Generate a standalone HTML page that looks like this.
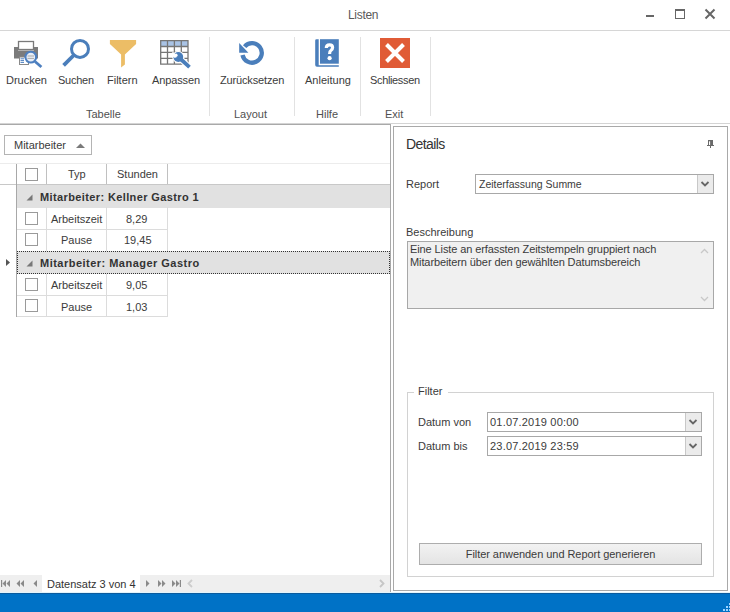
<!DOCTYPE html>
<html><head><meta charset="utf-8">
<style>
*{margin:0;padding:0;box-sizing:border-box}
html,body{width:730px;height:612px;overflow:hidden;background:#fff}
body{position:relative;font-family:"Liberation Sans",sans-serif;font-size:11px;color:#3b3b3b}
.a{position:absolute}
.t{position:absolute;white-space:nowrap;line-height:11px}
.ln{position:absolute;background:#c8c8c8}
</style></head><body>

<!-- title bar -->
<div class="t" style="left:348px;top:9px;font-size:12px;line-height:12px;letter-spacing:-0.3px;color:#5a5a5a">Listen</div>
<div class="a" style="left:646px;top:15px;width:8px;height:2px;background:#666"></div>
<div class="a" style="left:675px;top:9px;width:10px;height:10px;border:1px solid #666;border-top-width:2px"></div>
<svg class="a" style="left:704px;top:8px" width="12" height="12" viewBox="0 0 12 12"><path d="M1.5 1.5L10.5 10.5M10.5 1.5L1.5 10.5" stroke="#666" stroke-width="2"/></svg>

<div class="ln" style="left:0;top:30px;width:730px;height:1px;background:#d6d6d6"></div>


<!-- icons -->
<svg class="a" style="left:0;top:30px" width="440" height="45" viewBox="0 30 440 45">
 <!-- printer -->
 <rect x="18.5" y="41.5" width="15" height="8" fill="#fff" stroke="#7a7a7a" stroke-width="1.3"/>
 <path d="M14 47H18V50.5H34V47H38V58.5H14Z" fill="#7b7b7b"/>
 <rect x="19.5" y="57" width="9" height="7.5" fill="#fff" stroke="#8a8a8a" stroke-width="1"/>
 <path d="M20.5 58.8H24M20.5 60.6H24M20.5 62.4H24" stroke="#4d7fbf" stroke-width="1"/>
 <line x1="35" y1="61.5" x2="41.4" y2="67" stroke="#4d7fbf" stroke-width="2.8"/>
 <circle cx="30.8" cy="57.1" r="5.4" fill="#e8eef6" stroke="#4d7fbf" stroke-width="2.1"/>
 <path d="M27.5 56H34M27.5 58.4H34" stroke="#a9a9a9" stroke-width="1"/>
 <!-- search -->
 <circle cx="80" cy="48.9" r="8.5" fill="none" stroke="#4a7ebb" stroke-width="3"/>
 <line x1="74" y1="55" x2="63.6" y2="65.4" stroke="#4a7ebb" stroke-width="3.8"/>
 <!-- filter -->
 <path d="M109.9 40H136.1V43.9L124.9 54.5V64.5L121.1 67.5V54.5L109.9 43.9Z" fill="#ecbd66"/>
 <!-- grid -->
 <rect x="160.7" y="40.7" width="27.3" height="5.8" fill="#a9c3e5"/>
 <path d="M160.7 40.7H188V64.2H160.7Z M167.5 40.7V64.2 M174.4 40.7V64.2 M181.3 40.7V64.2 M160.7 46.5H188 M160.7 52.4H188 M160.7 58.3H188" fill="none" stroke="#767676" stroke-width="1.3"/>
 <g stroke="#fff" stroke-width="2.2" fill="#fff">
  <circle cx="178.3" cy="57" r="5"/>
  <line x1="180" y1="58.5" x2="189.5" y2="67.2" stroke-width="6"/>
 </g>
 <circle cx="178.3" cy="57" r="4.9" fill="#4a7ebb"/>
 <line x1="180" y1="58.5" x2="189.5" y2="67.2" stroke="#4a7ebb" stroke-width="3.8"/>
 <path d="M173 51.8L176.6 55.4L176.4 57.6L174.2 57.8L170.6 54.2Z" fill="#fff"/>
 <circle cx="176" cy="55.2" r="1.6" fill="#fff"/>
 <!-- refresh -->
 <path d="M242.5 55 A9.75 9.75 0 1 0 244.6 46.6" fill="none" stroke="#4a7ebb" stroke-width="4.3"/>
 <path d="M239.2 43.1V52.8H248.4Z" fill="#4a7ebb"/>
 <!-- book -->
 <path d="M315.2 40.5Q315.2 39.2 316.5 39.2H318.7V65.3H338.8V66.8H317Q315.2 66.8 315.2 65Z" fill="#4a7ebb"/>
 <rect x="320" y="39.2" width="18.8" height="24.5" fill="#4a7ebb"/>
 <path d="M326.3 48Q326.3 44.8 329.5 44.8Q332.6 44.8 332.6 47.6Q332.6 49.4 330.9 50.5Q329.6 51.3 329.6 54" fill="none" stroke="#fff" stroke-width="3.2"/>
 <circle cx="329.6" cy="58.2" r="2.1" fill="#fff"/>
 <!-- close -->
 <rect x="380" y="38" width="30" height="30" fill="#e05b36"/>
 <path d="M386.5 44.5L403.5 61.5M403.5 44.5L386.5 61.5" stroke="#fff" stroke-width="4"/>
</svg>

<!-- ribbon -->
<div class="t" style="left:6px;top:75px">Drucken</div>
<div class="t" style="left:58px;top:75px;letter-spacing:-0.25px">Suchen</div>
<div class="t" style="left:107px;top:75px">Filtern</div>
<div class="t" style="left:152px;top:75px;letter-spacing:-0.12px">Anpassen</div>
<div class="t" style="left:220px;top:75px;letter-spacing:-0.15px">Zurücksetzen</div>
<div class="t" style="left:305px;top:75px">Anleitung</div>
<div class="t" style="left:370px;top:75px;letter-spacing:-0.35px">Schliessen</div>

<div class="t" style="left:86px;top:109px;color:#505050">Tabelle</div>
<div class="t" style="left:234px;top:109px;color:#505050">Layout</div>
<div class="t" style="left:316px;top:109px;color:#505050">Hilfe</div>
<div class="t" style="left:385px;top:109px;color:#505050">Exit</div>

<div class="ln" style="left:209px;top:37px;width:1px;height:79px;background:#e2e2e2"></div>
<div class="ln" style="left:294px;top:37px;width:1px;height:79px;background:#e2e2e2"></div>
<div class="ln" style="left:360px;top:37px;width:1px;height:79px;background:#e2e2e2"></div>
<div class="ln" style="left:430px;top:37px;width:1px;height:79px;background:#e2e2e2"></div>

<div class="ln" style="left:0;top:123px;width:730px;height:1px;background:#d4d4d4"></div>

<!-- left panel -->
<div class="a" style="left:-1px;top:124px;width:392px;height:469px;border:1px solid #a9a9a9;border-bottom:none"></div>

<!-- right panel -->
<div class="a" style="left:393px;top:126px;width:335px;height:465px;border:1px solid #a9a9a9"></div>


<!-- left panel content -->
<div class="a" style="left:4px;top:135px;width:88px;height:20px;border:1px solid #b4b4b4;background:#fff"></div>
<div class="t" style="left:14px;top:140px">Mitarbeiter</div>
<svg class="a" style="left:75px;top:142px" width="11" height="7"><path d="M1 6H10L5.5 1.5Z" fill="#7a7a7a"/></svg>
<div class="ln" style="left:0;top:163px;width:390px;height:1px;background:#ececec"></div>

<!-- header -->
<div class="ln" style="left:0;top:184px;width:390px;height:1px;background:#c8c8c8"></div>
<div class="ln" style="left:16px;top:164px;width:1px;height:153px;background:#a8a8a8"></div>
<div class="ln" style="left:46px;top:164px;width:1px;height:20px;background:#c0c0c0"></div>
<div class="ln" style="left:106px;top:164px;width:1px;height:20px;background:#c0c0c0"></div>
<div class="ln" style="left:167px;top:164px;width:1px;height:20px;background:#c0c0c0"></div>
<div class="a" style="left:25px;top:168px;width:13px;height:13px;border:1px solid #9a9a9a"></div>
<div class="t" style="left:68px;top:169px">Typ</div>
<div class="t" style="left:117px;top:169px">Stunden</div>

<!-- group row 1 -->
<div class="a" style="left:17px;top:185px;width:373px;height:23px;background:#e1e1e1"></div>
<svg class="a" style="left:25px;top:193px" width="9" height="9"><path d="M7.5 1.5V7.5H1.5Z" fill="#787878"/></svg>
<div class="t" style="left:40px;top:192px;font-weight:bold;letter-spacing:0.38px;color:#333">Mitarbeiter: Kellner Gastro 1</div>

<!-- data rows 1 -->
<div class="ln" style="left:17px;top:229px;width:150px;height:1px;background:#dcdcdc"></div>
<div class="ln" style="left:17px;top:251px;width:150px;height:1px;background:#dcdcdc"></div>
<div class="ln" style="left:46px;top:207px;width:1px;height:44px;background:#dcdcdc"></div>
<div class="ln" style="left:106px;top:207px;width:1px;height:44px;background:#dcdcdc"></div>
<div class="ln" style="left:167px;top:207px;width:1px;height:44px;background:#dcdcdc"></div>
<div class="a" style="left:25px;top:212px;width:13px;height:13px;border:1px solid #9a9a9a"></div>
<div class="a" style="left:25px;top:233px;width:13px;height:13px;border:1px solid #9a9a9a"></div>
<div class="t" style="left:51px;top:214px">Arbeitszeit</div>
<div class="t" style="left:126px;top:214px">8,29</div>
<div class="t" style="left:61px;top:235px">Pause</div>
<div class="t" style="left:124px;top:235px">19,45</div>

<!-- group row 2 -->
<div class="a" style="left:17px;top:251px;width:373px;height:23px;background:#e1e1e1;border:1px dotted #333"></div>
<svg class="a" style="left:5px;top:258px" width="6" height="9"><path d="M1 1V8L5 4.5Z" fill="#555"/></svg>
<svg class="a" style="left:25px;top:258.5px" width="9" height="9"><path d="M7.5 1.5V7.5H1.5Z" fill="#787878"/></svg>
<div class="t" style="left:40px;top:258px;font-weight:bold;letter-spacing:0.48px;color:#333">Mitarbeiter: Manager Gastro</div>

<!-- data rows 2 -->
<div class="ln" style="left:17px;top:295px;width:150px;height:1px;background:#dcdcdc"></div>
<div class="ln" style="left:17px;top:316px;width:150px;height:1px;background:#dcdcdc"></div>
<div class="ln" style="left:46px;top:274px;width:1px;height:43px;background:#dcdcdc"></div>
<div class="ln" style="left:106px;top:274px;width:1px;height:43px;background:#dcdcdc"></div>
<div class="ln" style="left:167px;top:274px;width:1px;height:43px;background:#dcdcdc"></div>
<div class="a" style="left:25px;top:278px;width:13px;height:13px;border:1px solid #9a9a9a"></div>
<div class="a" style="left:25px;top:299px;width:13px;height:13px;border:1px solid #9a9a9a"></div>
<div class="t" style="left:51px;top:280px">Arbeitszeit</div>
<div class="t" style="left:126px;top:280px">9,05</div>
<div class="t" style="left:61px;top:302px">Pause</div>
<div class="t" style="left:126px;top:302px">1,03</div>

<!-- nav bar -->
<div class="a" style="left:0;top:575px;width:390px;height:17px;background:#efefef"></div>
<div class="a" style="left:42px;top:575px;width:98px;height:17px;background:#fff"></div>
<div class="t" style="left:47px;top:579px;color:#333">Datensatz 3 von 4</div>
<svg class="a" style="left:0;top:575px" width="390" height="17" viewBox="0 575 390 17">
 <g fill="#8a8a8a">
 <path d="M1 580H2.2V587H1Z M10 580V587L6.5 583.5Z M6 580V587L2.5 583.5Z"/>
 <path d="M20 580V587L16.5 583.5Z M24 580V587L20.5 583.5Z"/>
 <path d="M37 580V587L33.5 583.5Z"/>
 <path d="M146 580V587L149.5 583.5Z"/>
 <path d="M158 580V587L161.5 583.5Z M162 580V587L165.5 583.5Z"/>
 <path d="M172 580V587L175.5 583.5Z M176 580V587L179.5 583.5Z M179.8 580H181V587H179.8Z"/>
 </g>
 <path d="M192 580L188.5 583.5L192 587" fill="none" stroke="#cdcdcd" stroke-width="1.8"/>
 <path d="M380 580L383.5 583.5L380 587" fill="none" stroke="#c6c6c6" stroke-width="1.8"/>
</svg>

<!-- right panel content -->
<div class="t" style="left:406px;top:137px;font-size:14px;line-height:14px;letter-spacing:-0.6px;color:#333">Details</div>
<svg class="a" style="left:706px;top:139px" width="10" height="10" viewBox="706 139 10 10"><path d="M708 140H713V145H714V146H711V148H710V146H707V145H708Z" fill="#6a6a6a"/><rect x="709" y="141.3" width="1.1" height="3.7" fill="#fff"/></svg>

<div class="t" style="left:406px;top:179px">Report</div>
<div class="a" style="left:475px;top:174px;width:239px;height:20px;border:1px solid #a8a8a8;background:#fff"></div>
<div class="a" style="left:697px;top:175px;width:16px;height:18px;background:#ebebeb;border-left:1px solid #c8c8c8"></div>
<svg class="a" style="left:697px;top:175px" width="16" height="18"><path d="M4.5 7L8 10.5L11.5 7" fill="none" stroke="#666" stroke-width="1.8"/></svg>
<div class="t" style="left:479px;top:179px;font-size:10.5px;letter-spacing:0px">Zeiterfassung Summe</div>

<div class="t" style="left:406px;top:227px">Beschreibung</div>
<div class="a" style="left:407px;top:241px;width:307px;height:68px;border:1px solid #a8a8a8;background:#f0f0f0"></div>
<div class="t" style="left:410px;top:243px;line-height:13px;color:#3a3a3a;letter-spacing:-0.1px">Eine Liste an erfassten Zeitstempeln gruppiert nach<br>Mitarbeitern über den gewählten Datumsbereich</div>
<svg class="a" style="left:698px;top:244px" width="14" height="62"><path d="M3 9L6.5 5.5L10 9" fill="none" stroke="#c8c8c8" stroke-width="1.3"/><path d="M3 53L6.5 56.5L10 53" fill="none" stroke="#c8c8c8" stroke-width="1.3"/></svg>

<!-- filter group -->
<div class="a" style="left:407px;top:392px;width:307px;height:185px;border:1px solid #d2d2d2"></div>
<div class="a" style="left:414px;top:388px;width:34px;height:8px;background:#fff"></div>
<div class="t" style="left:418px;top:386px">Filter</div>

<div class="t" style="left:418px;top:417px">Datum von</div>
<div class="a" style="left:487px;top:412px;width:215px;height:20px;border:1px solid #a8a8a8;background:#fff"></div>
<div class="a" style="left:685px;top:413px;width:16px;height:18px;background:#ebebeb;border-left:1px solid #c8c8c8"></div>
<svg class="a" style="left:685px;top:413px" width="16" height="18"><path d="M4.5 7L8 10.5L11.5 7" fill="none" stroke="#666" stroke-width="1.8"/></svg>
<div class="t" style="left:490px;top:417px;letter-spacing:0.2px">01.07.2019 00:00</div>

<div class="t" style="left:418px;top:441px">Datum bis</div>
<div class="a" style="left:487px;top:436px;width:215px;height:20px;border:1px solid #a8a8a8;background:#fff"></div>
<div class="a" style="left:685px;top:437px;width:16px;height:18px;background:#ebebeb;border-left:1px solid #c8c8c8"></div>
<svg class="a" style="left:685px;top:437px" width="16" height="18"><path d="M4.5 7L8 10.5L11.5 7" fill="none" stroke="#666" stroke-width="1.8"/></svg>
<div class="t" style="left:490px;top:441px;letter-spacing:0.2px">23.07.2019 23:59</div>

<div class="a" style="left:419px;top:543px;width:283px;height:22px;border:1px solid #adadad;background:linear-gradient(#f2f2f2,#e4e4e4)"></div>
<div class="t" style="left:419px;top:548.5px;width:283px;text-align:center;letter-spacing:-0.05px">Filter anwenden und Report generieren</div>

<!-- status bar -->
<div class="a" style="left:0;top:592px;width:730px;height:1px;background:#e2f4fb"></div>
<div class="a" style="left:0;top:593px;width:730px;height:19px;background:#0072c6;border-top:1px solid #0b5b9e"></div>
<svg class="a" style="left:718px;top:600px" width="12" height="12" viewBox="718 600 12 12"><g fill="#9fd3ff"><rect x="726" y="606" width="2" height="2"/><rect x="723" y="609" width="2" height="2"/><rect x="726" y="609" width="2" height="2"/><rect x="729" y="603" width="2" height="2"/><rect x="729" y="606" width="2" height="2"/><rect x="729" y="609" width="2" height="2"/></g></svg>

</body></html>
